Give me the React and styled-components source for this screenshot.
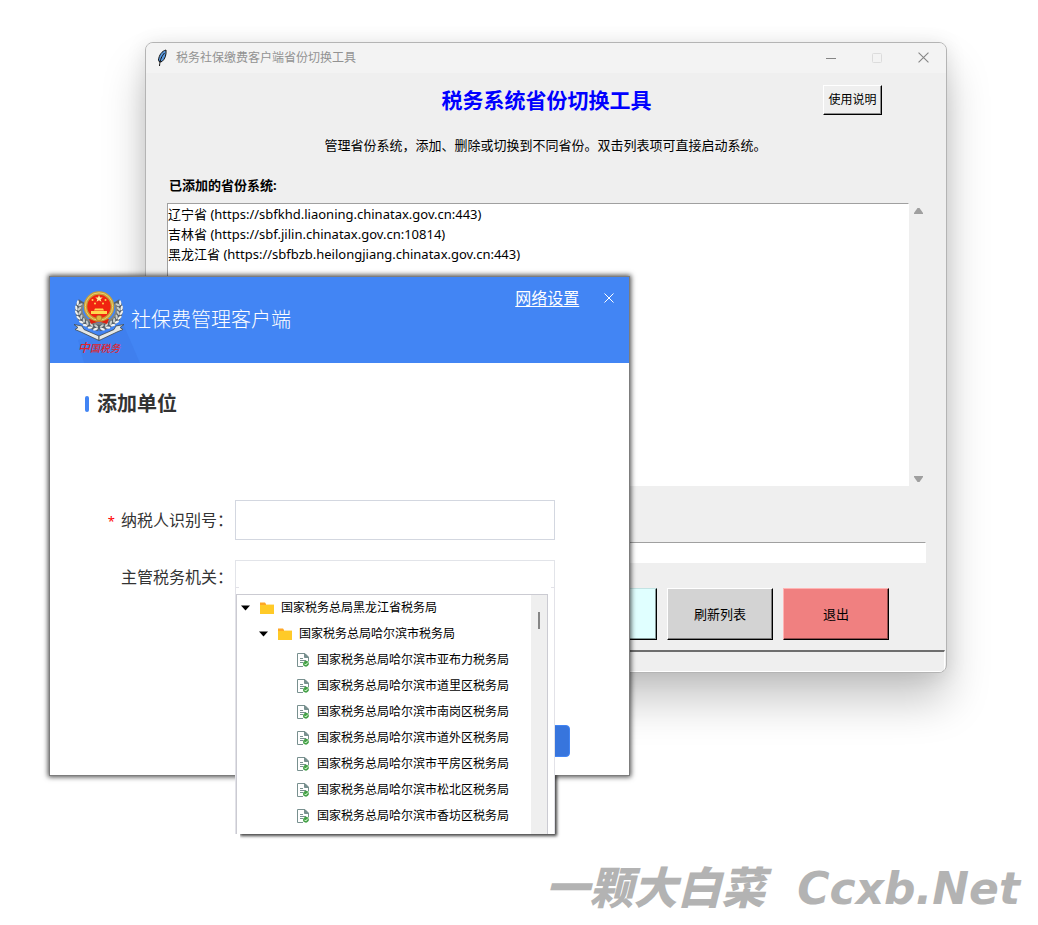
import React, { useState } from 'react';
import styled, { createGlobalStyle } from 'styled-components';

const provinces = [
  { name: '辽宁省', url: 'https://sbfkhd.liaoning.chinatax.gov.cn:443' },
  { name: '吉林省', url: 'https://sbf.jilin.chinatax.gov.cn:10814' },
  { name: '黑龙江省', url: 'https://sbfbzb.heilongjiang.chinatax.gov.cn:443' },
];

const offices = [
  { level: 1, name: '国家税务总局黑龙江省税务局' },
  { level: 2, name: '国家税务总局哈尔滨市税务局' },
  { level: 3, name: '国家税务总局哈尔滨市亚布力税务局' },
  { level: 3, name: '国家税务总局哈尔滨市道里区税务局' },
  { level: 3, name: '国家税务总局哈尔滨市南岗区税务局' },
  { level: 3, name: '国家税务总局哈尔滨市道外区税务局' },
  { level: 3, name: '国家税务总局哈尔滨市平房区税务局' },
  { level: 3, name: '国家税务总局哈尔滨市松北区税务局' },
  { level: 3, name: '国家税务总局哈尔滨市香坊区税务局' },
];

const GlobalStyle = createGlobalStyle`
  *, *::before, *::after {
    box-sizing: border-box;
  }
  body {
    margin: 0;
    background: #fff;
    color: #000;
    font-family: 'Noto Sans', 'Noto Sans CJK SC', sans-serif;
    font-size: 13px;
    line-height: 20px;
  }
  button, input {
    font: inherit;
    color: inherit;
    margin: 0;
    padding: 0;
    border-radius: 0;
  }
`;

const Desktop = styled.main`
  position: relative;
  display: flex;
  flex-direction: column;
  justify-content: flex-end;
  min-height: 100vh;
  overflow: hidden;
`;

const Watermark = styled.p`
  display: flex;
  justify-content: flex-end;
  gap: 32px;
  margin: 0 18px 4px 0;
  color: #b3b3b3;
  font-family: 'DejaVu Sans', 'Noto Sans CJK SC', sans-serif;
  font-size: 44px;
  font-style: italic;
  font-weight: 900;
  line-height: 64px;
`;

/* switcher window */

const ToolWindow = styled.section`
  position: absolute;
  top: 42px;
  left: 145px;
  right: 91px;
  border: 1px solid #b4b4b4;
  border-radius: 8px;
  background: #efefef;
  box-shadow: 0 28px 44px rgba(0, 0, 0, 0.22), 0 2px 20px rgba(0, 0, 0, 0.1);
  overflow: hidden;
`;

const TitleBar = styled.header`
  display: flex;
  align-items: center;
  height: 30px;
  padding: 0 15px 1px 9px;
  background: #f3f3f3;
  color: #929292;
  font-size: 12px;
`;

const TitleText = styled.span`
  flex: 1;
  margin-left: 7px;
`;

const WindowButtons = styled.div`
  display: flex;
  gap: 30px;
`;

const IconButton = styled.button`
  display: flex;
  align-items: center;
  justify-content: center;
  width: 16px;
  height: 16px;
  border: 0;
  background: none;
`;

const ToolBody = styled.div`
  padding: 12px 20px 10px 21px;
`;

const ToolHeader = styled.div`
  display: grid;
  grid-template-columns: 1fr auto 1fr;
  align-items: center;
`;

const ToolTitle = styled.h1`
  grid-column: 2;
  margin: 0;
  color: #0000ff;
  font-size: 21px;
  font-weight: 700;
  line-height: 30px;
`;

const RaisedButton = styled.button`
  width: ${({ $small }) => ($small ? 59 : 106)}px;
  height: ${({ $small }) => ($small ? 30 : 52)}px;
  border: 1px solid;
  border-color: ${({ $light = '#fff' }) => `${$light} #000 #000 ${$light}`};
  background: ${({ $color = '#efefef' }) => $color};
  box-shadow: inset -1px -1px 0 rgba(0, 0, 0, 0.4);
  font-size: ${({ $small }) => ($small ? 12 : 13)}px;
`;

const HelpCell = styled.div`
  display: flex;
  justify-content: flex-end;
  padding-right: 44px;
`;

const Description = styled.p`
  margin: 20px 2px 20px 0;
  text-align: center;
`;

const ListTitle = styled.h2`
  margin: 0 0 8px 2px;
  font-size: 13px;
  font-weight: 700;
`;

const ListRow = styled.div`
  display: flex;
  height: 283px;
`;

const ProvinceList = styled.ul`
  flex: 1;
  margin: 0;
  padding: 0;
  border: 1px solid #fff;
  border-top-color: #a0a0a0;
  border-left-color: #a0a0a0;
  background: #fff;
  list-style: none;
`;

const ScrollTrack = styled.div`
  display: flex;
  flex-direction: column;
  align-items: center;
  justify-content: space-between;
  width: 17px;
  padding: 5px 0 4px 1px;
`;

const Entry = styled.input`
  display: block;
  width: 100%;
  height: 21px;
  margin-top: 56px;
  border: 1px solid #fff;
  border-top-color: #a0a0a0;
  border-left-color: #a0a0a0;
  background: #fff;
`;

const Actions = styled.div`
  display: flex;
  justify-content: flex-end;
  gap: 10px;
  margin-top: 25px;
  padding-right: 37px;
`;

const StatusBar = styled.footer`
  height: 22px;
  margin-right: 1px;
  border: 1px solid #fff;
  border-top: 2px solid #6e6e6e;
  border-left-color: #a0a0a0;
`;

/* client dialog */

const Dialog = styled.section`
  position: absolute;
  top: 276px;
  left: 49px;
  width: 56%;
  min-width: 560px;
  padding-bottom: 18px;
  border: 1px solid #7d7d7d;
  background: #fff;
  box-shadow: 0 0 5px 1px rgba(0, 0, 0, 0.7);
  color: #333;
`;

const DialogHeader = styled.header`
  display: flex;
  height: 86px;
  padding: 13px 12px 0 24px;
  background: #4285f4;
  color: #fff;
`;

const Brand = styled.div`
  flex: 1;
  margin: 16px 0 0 7px;
  font-size: 20px;
  font-weight: 300;
  line-height: 28px;
`;

const NetworkLink = styled.a`
  height: 20px;
  margin-right: 22px;
  color: #fff;
  font-size: 16px;
  line-height: 16px;
  text-underline-offset: 2px;
`;

const SectionTitle = styled.h2`
  display: flex;
  align-items: center;
  gap: 8px;
  margin: 27px 0 82px 35px;
  font-size: 20px;
  font-weight: 700;
  line-height: 28px;

  &::before {
    content: '';
    width: 4px;
    height: 16px;
    border-radius: 2px;
    background: #4285f4;
  }
`;

const Fields = styled.div`
  display: grid;
  gap: 20px;
  padding: 0 74px 0 50px;
`;

const Field = styled.div`
  display: flex;
  align-items: center;
`;

const FieldLabel = styled.label`
  width: 135px;
  padding-right: 2px;
  font-size: 16px;
  text-align: right;
  white-space: nowrap;
`;

const Required = styled.span`
  margin-right: 6px;
  color: #f00;
  font-size: 13px;
`;

const Control = styled.div`
  position: relative;
  flex: 1;
`;

const TextBox = styled.input`
  display: block;
  width: 100%;
  height: ${({ $open }) => ($open ? 34 : 40)}px;
  border: 1px solid ${({ $open }) => ($open ? '#e2e4e9' : '#d3d7e0')};
  border-bottom-width: ${({ $open }) => ($open ? 0 : 1)}px;
  background: #fff;
`;

const Popup = styled.div`
  position: absolute;
  top: 27px;
  left: 0;
  right: 0;
  z-index: 1;
  padding: 7px 6px 0 0;
  border: solid #e2e2e8;
  border-width: 0 1px;
  background: linear-gradient(#e2e2e8, #e2e2e8) left top / 3px 1px no-repeat,
    linear-gradient(#e2e2e8, #e2e2e8) right top / 3px 1px no-repeat, #fff;

  /* only the part that hangs below the dialog casts a shadow */
  &::before {
    content: '';
    position: absolute;
    top: 188px;
    right: -1px;
    bottom: 0;
    left: 4px;
    box-shadow: 1px 1px 3px 1px rgba(0, 0, 0, 0.75);
    clip-path: inset(0 -8px -8px 0);
    z-index: -1;
  }
`;

const TreeBox = styled.div`
  display: flex;
  border: 1px solid #cbcbd2;
  border-bottom: 0;
  background: #fff;
  color: #000;
`;

const Tree = styled.ul`
  flex: 1;
  margin: 0;
  padding: 0 0 5px;
  list-style: none;
`;

const TreeItem = styled.li`
  display: flex;
  align-items: center;
  height: 26px;
  padding-left: ${({ $level }) => ({ 1: 4, 2: 22, 3: 60 })[$level]}px;
  font-size: 12px;
  white-space: nowrap;

  svg {
    flex: none;
    margin-right: 8px;
  }
`;

const TreeTrack = styled.div`
  width: 16px;
  padding: 17px 7px;
  background: #efefef;

  &::before {
    content: '';
    display: block;
    width: 2px;
    height: 17px;
    background: #868686;
  }
`;

const DialogActions = styled.div`
  display: flex;
  justify-content: flex-end;
  margin-top: 131px;
  padding-right: 59px;
`;

const PrimaryButton = styled.button`
  width: 104px;
  height: 32px;
  border: 1px solid #4285f4;
  border-radius: 4px;
  background: #3775dd;
`;

/* icons */

const Feather = () => (
  <svg width="14" height="18" viewBox="0 0 14 18" aria-hidden="true">
    <path d="M11 1C7 2 4 6 3.500 11L4.500 13L7 12.500C10 10 11.500 6 11 1Z" fill="#5c9be0" stroke="#111" strokeWidth="1" />
    <path d="M9.500 4C7 7 5 10 4.500 17" fill="none" stroke="#111" strokeWidth="1" />
  </svg>
);

const Arrow = ({ up }) => (
  <svg width="9" height="7" viewBox="0 0 9 7" aria-hidden="true">
    <path d={up ? 'M3.500 0H5.500L9 5V6H0V5Z' : 'M0 1H9V2L5.500 7H3.500L0 2Z'} fill="#9f9f9f" />
  </svg>
);

const Cross = ({ size, color }) => (
  <svg width={size} height={size} viewBox="0 0 10 10" aria-hidden="true">
    <path d="M0.500 0.500L9.500 9.500M9.500 0.500L0.500 9.500" stroke={color} strokeWidth="1" />
  </svg>
);

const Caret = () => (
  <svg width="10" height="6" viewBox="0 0 10 6" aria-hidden="true">
    <path d="M0 0.500H9L4.500 5.500Z" fill="#000" />
  </svg>
);

const Folder = () => (
  <svg width="14" height="12" viewBox="0 0 14 12" overflow="visible" aria-hidden="true">
    <path d="M1 0.500H6L7 2H15V6H1Z" fill="#ffa726" />
    <path d="M7 2H15V4H7Z" fill="#ffe7a8" />
    <path d="M1 3H15V12H1Z" fill="#ffca28" />
  </svg>
);

const DocIcon = () => (
  <svg width="12" height="14" viewBox="0 0 12 14" aria-hidden="true">
    <path d="M6 13.500H0.500V0.500H8L11.500 4V8" fill="#fff" stroke="#78908f" />
    <path d="M7.500 0.500V4.500H11.500Z" fill="#78908f" stroke="#78908f" />
    <path d="M3 5.500H6M3 7.500H9M3 9.500H6" stroke="#78908f" />
    <path d="M9 7.500L10.200 8.200L11.600 8.200L11.500 9.700L12 11L11.300 12.200L10.200 13.300L9 13.700L7.600 13.300L6.300 12.400L6 11L6.300 9.600L7.500 8.300Z" fill="#43a047" />
    <path d="M7.500 10.800L8.700 12L10.800 9.600" fill="none" stroke="#e8ffe0" />
  </svg>
);

const leaves = [
  [5.5, 13, -35], [4, 17.5, -15], [4, 22, 0], [5.5, 26.5, 20], [8, 30.5, 35], [11.5, 33.5, 50], [16, 36, 65], [21, 37.5, 80],
];

const Emblem = () => (
  <svg width="50" height="73" viewBox="0 0 50 73" overflow="visible" role="img" aria-label="中国税务">
    <path d="M4 50L10 73H66L50 36Z" fill="#3f7fee" />
    {[false, true].map(flip => (
      <g key={String(flip)} transform={flip ? 'translate(50 0) scale(-1 1)' : undefined}>
        <path d="M7.500 11C1 21 4 33 25 38" fill="none" stroke="#56606a" strokeWidth="6.500" />
        <path d="M9 14C5 22 9 31 25 34" fill="none" stroke="#7f8482" strokeWidth="2" />
        {leaves.map(([x, y, angle]) => (
          <g key={y} transform={`translate(${x} ${y}) rotate(${-angle})`}>
            <ellipse cx="-1.700" cy="0" rx="1.100" ry="2.500" fill="#f0f2f2" transform="rotate(-28)" />
            <ellipse cx="1.900" cy="0" rx="1.100" ry="2.400" fill="#c9cecd" transform="rotate(28)" />
          </g>
        ))}
        <path d="M0 34.500L8 36L10 39.500L25 46V50.500L7 42L1 39.500L4 37.500Z" fill="#e3e7e7" stroke="#3e4750" strokeWidth="0.800" />
      </g>
    ))}
    <path d="M15 29H35L33 34C28 31.500 22 31.500 17 34Z" fill="#e02312" />
    <circle cx="25" cy="16.500" r="13.500" fill="#f02410" stroke="#c99f38" strokeWidth="3.500" />
    <circle cx="25" cy="16.500" r="13.700" fill="none" stroke="#ecd070" strokeWidth="1" />
    <path d="M25 5L26 7.500H28.700L26.600 9.200L27.400 11.700L25 10.200L22.600 11.700L23.400 9.200L21.300 7.500H24Z" fill="#fff0a0" />
    <g fill="#ffd84f">
      <circle cx="18.500" cy="10" r="1" />
      <circle cx="31.500" cy="10" r="1" />
      <circle cx="21" cy="13.500" r="1" />
      <circle cx="29" cy="13.500" r="1" />
      <path d="M21 18.500H29L30 20.500H20Z" />
      <path d="M17 21H33V24H17Z" />
    </g>
    <circle cx="25" cy="28" r="2.800" fill="#e0b540" stroke="#9c7420" strokeWidth="0.600" />
    <text x="4" y="62" fill="#e0242b" fontSize="10" fontStyle="italic" fontWeight="500" fontFamily="Noto Sans CJK SC, sans-serif">
      <tspan fontSize="12">中</tspan>国税务
    </text>
  </svg>
);

const SwitcherWindow = () => {
  const [custom, setCustom] = useState('');
  return (
    <ToolWindow aria-label="税务社保缴费客户端省份切换工具">
      <TitleBar>
        <Feather />
        <TitleText>税务社保缴费客户端省份切换工具</TitleText>
        <WindowButtons>
          <IconButton aria-label="最小化">
            <svg width="10" height="10" aria-hidden="true"><path d="M0 5.500H10" stroke="#858585" /></svg>
          </IconButton>
          <IconButton aria-label="最大化" disabled>
            <svg width="10" height="10" aria-hidden="true"><rect x="0.500" y="0.500" width="9" height="9" rx="1" fill="none" stroke="#dcdcdc" /></svg>
          </IconButton>
          <IconButton aria-label="关闭"><Cross size={11} color="#858585" /></IconButton>
        </WindowButtons>
      </TitleBar>
      <ToolBody>
        <ToolHeader>
          <ToolTitle>税务系统省份切换工具</ToolTitle>
          <HelpCell><RaisedButton $small>使用说明</RaisedButton></HelpCell>
        </ToolHeader>
        <Description>管理省份系统，添加、删除或切换到不同省份。双击列表项可直接启动系统。</Description>
        <ListTitle>已添加的省份系统:</ListTitle>
        <ListRow>
          <ProvinceList>
            {provinces.map(({ name, url }) => (
              <li key={url}>{`${name} (${url})`}</li>
            ))}
          </ProvinceList>
          <ScrollTrack>
            <Arrow up />
            <Arrow />
          </ScrollTrack>
        </ListRow>
        <Entry aria-label="省份地址" value={custom} onChange={e => setCustom(e.target.value)} />
        <Actions>
          <RaisedButton $color="#e0ffff" $light="#c3e3e3" aria-label="切换" />
          <RaisedButton $color="#d3d3d3">刷新列表</RaisedButton>
          <RaisedButton $color="#f08080" $light="#ffb4b4">退出</RaisedButton>
        </Actions>
      </ToolBody>
      <StatusBar />
    </ToolWindow>
  );
};

const ClientDialog = () => (
  <Dialog aria-label="社保费管理客户端">
    <DialogHeader>
      <Emblem />
      <Brand>社保费管理客户端</Brand>
      <NetworkLink href="#network">网络设置</NetworkLink>
      <IconButton aria-label="关闭"><Cross size={10} color="#fff" /></IconButton>
    </DialogHeader>
    <SectionTitle>添加单位</SectionTitle>
    <Fields>
      <Field>
        <FieldLabel htmlFor="taxpayer"><Required>*</Required>纳税人识别号：</FieldLabel>
        <Control><TextBox id="taxpayer" /></Control>
      </Field>
      <Field>
        <FieldLabel htmlFor="office">主管税务机关：</FieldLabel>
        <Control>
          <TextBox id="office" $open role="combobox" aria-expanded="true" aria-controls="office-tree" />
          <Popup>
            <TreeBox>
              <Tree id="office-tree" role="tree">
                {offices.map(({ level, name }) => (
                  <TreeItem key={name} $level={level} role="treeitem" aria-level={level}>
                    {level < 3 && <Caret />}
                    {level < 3 ? <Folder /> : <DocIcon />}
                    {name}
                  </TreeItem>
                ))}
              </Tree>
              <TreeTrack />
            </TreeBox>
          </Popup>
        </Control>
      </Field>
    </Fields>
    <DialogActions>
      <PrimaryButton aria-label="确定" />
    </DialogActions>
  </Dialog>
);

const App = () => (
  <Desktop>
    <GlobalStyle />
    <SwitcherWindow />
    <ClientDialog />
    <Watermark>
      <span>一颗大白菜</span>
      <span>Ccxb.Net</span>
    </Watermark>
  </Desktop>
);

export default App;
